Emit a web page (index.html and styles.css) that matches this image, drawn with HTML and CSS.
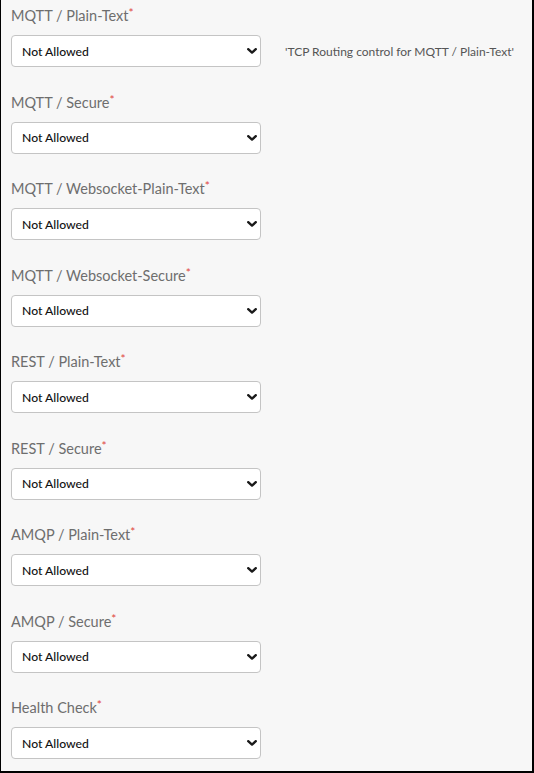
FILE: index.html
```html
<!DOCTYPE html>
<html>
<head>
<meta charset="utf-8">
<link rel="stylesheet" href="styles.css">
</head>
<body>
<div class="form">
  <div class="field">
    <label class="label">MQTT / Plain-Text<span class="req">*</span></label>
    <div class="row">
      <div class="select-wrap">
        <select class="select"><option>Not Allowed</option></select>
        <svg class="chev" viewBox="0 0 10 6" width="10" height="6"><path d="M1.2 1.2 L5 4.6 L8.8 1.2" fill="none" stroke="#1a1a1a" stroke-width="2.4" stroke-linecap="round" stroke-linejoin="round"/></svg>
      </div>
      <span class="help">'TCP Routing control for MQTT / Plain-Text'</span>
    </div>
  </div>
  <div class="field">
    <label class="label">MQTT / Secure<span class="req">*</span></label>
    <div class="row"><div class="select-wrap"><select class="select"><option>Not Allowed</option></select><svg class="chev" viewBox="0 0 10 6" width="10" height="6"><path d="M1.2 1.2 L5 4.6 L8.8 1.2" fill="none" stroke="#1a1a1a" stroke-width="2.4" stroke-linecap="round" stroke-linejoin="round"/></svg></div></div>
  </div>
  <div class="field">
    <label class="label">MQTT / Websocket-Plain-Text<span class="req">*</span></label>
    <div class="row"><div class="select-wrap"><select class="select"><option>Not Allowed</option></select><svg class="chev" viewBox="0 0 10 6" width="10" height="6"><path d="M1.2 1.2 L5 4.6 L8.8 1.2" fill="none" stroke="#1a1a1a" stroke-width="2.4" stroke-linecap="round" stroke-linejoin="round"/></svg></div></div>
  </div>
  <div class="field">
    <label class="label">MQTT / Websocket-Secure<span class="req">*</span></label>
    <div class="row"><div class="select-wrap"><select class="select"><option>Not Allowed</option></select><svg class="chev" viewBox="0 0 10 6" width="10" height="6"><path d="M1.2 1.2 L5 4.6 L8.8 1.2" fill="none" stroke="#1a1a1a" stroke-width="2.4" stroke-linecap="round" stroke-linejoin="round"/></svg></div></div>
  </div>
  <div class="field">
    <label class="label">REST / Plain-Text<span class="req">*</span></label>
    <div class="row"><div class="select-wrap"><select class="select"><option>Not Allowed</option></select><svg class="chev" viewBox="0 0 10 6" width="10" height="6"><path d="M1.2 1.2 L5 4.6 L8.8 1.2" fill="none" stroke="#1a1a1a" stroke-width="2.4" stroke-linecap="round" stroke-linejoin="round"/></svg></div></div>
  </div>
  <div class="field">
    <label class="label">REST / Secure<span class="req">*</span></label>
    <div class="row"><div class="select-wrap"><select class="select"><option>Not Allowed</option></select><svg class="chev" viewBox="0 0 10 6" width="10" height="6"><path d="M1.2 1.2 L5 4.6 L8.8 1.2" fill="none" stroke="#1a1a1a" stroke-width="2.4" stroke-linecap="round" stroke-linejoin="round"/></svg></div></div>
  </div>
  <div class="field">
    <label class="label">AMQP / Plain-Text<span class="req">*</span></label>
    <div class="row"><div class="select-wrap"><select class="select"><option>Not Allowed</option></select><svg class="chev" viewBox="0 0 10 6" width="10" height="6"><path d="M1.2 1.2 L5 4.6 L8.8 1.2" fill="none" stroke="#1a1a1a" stroke-width="2.4" stroke-linecap="round" stroke-linejoin="round"/></svg></div></div>
  </div>
  <div class="field">
    <label class="label">AMQP / Secure<span class="req">*</span></label>
    <div class="row"><div class="select-wrap"><select class="select"><option>Not Allowed</option></select><svg class="chev" viewBox="0 0 10 6" width="10" height="6"><path d="M1.2 1.2 L5 4.6 L8.8 1.2" fill="none" stroke="#1a1a1a" stroke-width="2.4" stroke-linecap="round" stroke-linejoin="round"/></svg></div></div>
  </div>
  <div class="field">
    <label class="label">Health Check<span class="req">*</span></label>
    <div class="row"><div class="select-wrap"><select class="select"><option>Not Allowed</option></select><svg class="chev" viewBox="0 0 10 6" width="10" height="6"><path d="M1.2 1.2 L5 4.6 L8.8 1.2" fill="none" stroke="#1a1a1a" stroke-width="2.4" stroke-linecap="round" stroke-linejoin="round"/></svg></div></div>
  </div>
</div>
</body>
</html>
```

FILE: styles.css
```css
html, body {
  margin: 0;
  padding: 0;
}
body {
  width: 534px;
  height: 773px;
  box-sizing: border-box;
  background: #f7f7f7;
  border-left: 1px solid #000;
  border-right: 2px solid #000;
  border-bottom: 2px solid #000;
  font-family: Lato, "Open Sans", sans-serif;
  overflow: hidden;
}
.form {
  display: flex;
  flex-direction: column;
  gap: 23.5px;
  padding: 4px 0 0 10px;
}
.field {
  display: flex;
  flex-direction: column;
  gap: 9px;
}
.label {
  font-size: 14.5px;
  line-height: 20px;
  color: #6e6e6e;
  height: 20px;
  padding-top: 2px;
}
.req {
  color: #e0463d;
  font-size: 12px;
  vertical-align: top;
  line-height: 14px;
}
.row {
  display: flex;
  align-items: center;
  gap: 24px;
}
.select-wrap {
  position: relative;
  flex: none;
  width: 250px;
  height: 32px;
}
.select {
  appearance: none;
  -webkit-appearance: none;
  width: 250px;
  height: 32px;
  box-sizing: border-box;
  border: 1px solid #c4c4c4;
  border-radius: 4px;
  background: #fff;
  padding: 0 10px;
  font-family: Lato, "Open Sans", sans-serif;
  font-size: 12.2px;
  font-weight: 500;
  color: #111;
  margin: 0;
}
.chev {
  position: absolute;
  right: 4px;
  top: 13px;
  pointer-events: none;
}
.help {
  font-size: 12px;
  color: #555;
  white-space: nowrap;
}
```
